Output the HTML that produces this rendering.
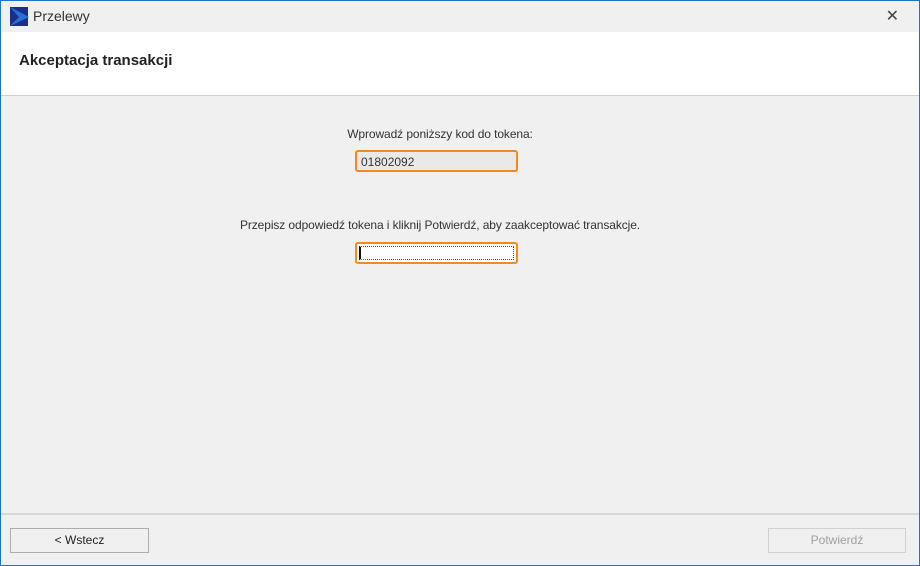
<!DOCTYPE html>
<html><head><style>
*{margin:0;padding:0;box-sizing:border-box}
body{width:920px;height:566px;position:relative;background:#f0f0f0;font-family:"Liberation Sans",sans-serif;overflow:hidden}
.win{position:absolute;left:0;top:0;width:920px;height:566px;border:1px solid #1b74c9}
.title{position:absolute;left:1px;top:1px;width:918px;height:31px;background:#f0f0f0}
.title span{position:absolute;left:32px;top:7px;font-size:14px;color:#333}
.x{position:absolute;right:20px;top:5px;font-size:16px;color:#444}
.hdr{position:absolute;left:1px;top:32px;width:918px;height:64px;background:#fff;border-bottom:1px solid #cfcfcf}
.hdr b{position:absolute;left:18px;top:20px;font-size:15px;color:#222}
.t{position:absolute;width:880px;left:0;text-align:center;font-size:12px;color:#333;letter-spacing:-0.1px}
.in{position:absolute;left:355px;width:163px;height:22px;border:2px solid #f28a1e;border-radius:3px;background:#e9e9e9;font-size:12px;color:#333;padding:3px 4px}
.line{position:absolute;left:1px;top:513px;width:918px;height:2px;background:#d8d8d8}
.btn{position:absolute;top:528px;height:25px;border:1px solid #adadad;background:#f0f0f0;font-size:12px;text-align:center;line-height:23px;color:#222}
</style></head><body>
<div class="win"></div>
<div class="title">
<svg style="position:absolute;left:9px;top:6px" width="20" height="20" viewBox="0 0 20 20"><rect x="0" y="0" width="18" height="19" fill="#1a2f8a"/><path d="M0 0 L19 10 L0 19 Z" fill="#2a6fd6"/><path d="M0 0 L9 10 L0 19 Z" fill="#1a2f8a"/></svg>
<span>Przelewy</span><div class="x">✕</div></div>
<div class="hdr"><b>Akceptacja transakcji</b></div>
<div class="t" style="top:127px">Wprowadź poniższy kod do tokena:</div>
<div class="in" style="top:150px">01802092</div>
<div class="t" style="top:218px">Przepisz odpowiedź tokena i kliknij Potwierdź, aby zaakceptować transakcje.</div>
<div class="in" style="top:242px;background:#fff"><div style="border:1px dotted #555;height:14px;margin:-1px -2px;border-left:2px solid #111"></div></div>
<div class="line"></div>
<div class="btn" style="left:10px;width:139px">&lt; Wstecz</div>
<div class="btn" style="left:768px;width:138px;color:#a0a0a0;border-color:#d0d0d0">Potwierdź</div>
</body></html>
